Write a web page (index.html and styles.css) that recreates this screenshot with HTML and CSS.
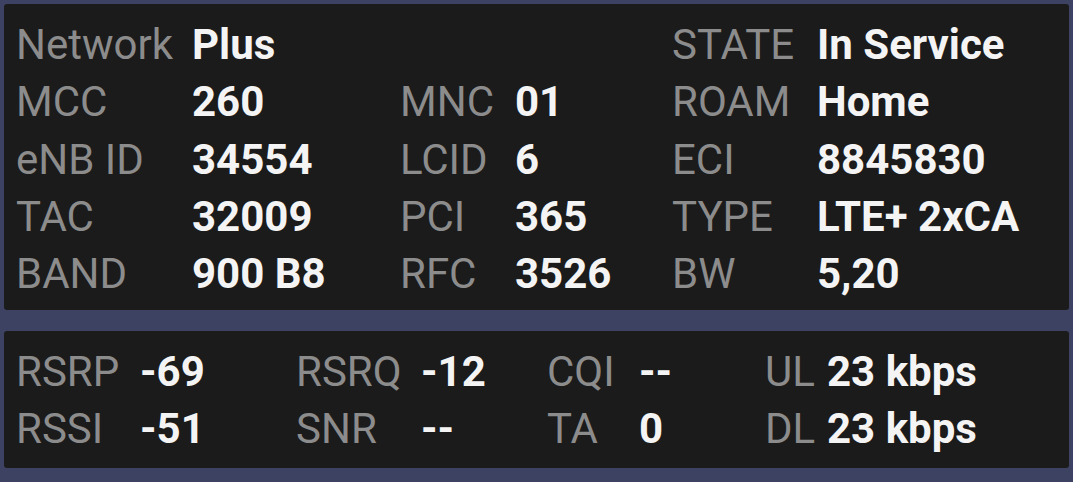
FILE: index.html
```html
<!DOCTYPE html>
<html>
<head>
<meta charset="utf-8">
<link rel="stylesheet" href="styles.css">
</head>
<body>
<div class="page">
  <section class="panel info">
    <span class="lbl">Network</span><span class="val">Plus</span><span class="lbl"></span><span class="val"></span><span class="lbl">STATE</span><span class="val">In Service</span>
    <span class="lbl">MCC</span><span class="val">260</span><span class="lbl">MNC</span><span class="val">01</span><span class="lbl">ROAM</span><span class="val">Home</span>
    <span class="lbl">eNB ID</span><span class="val">34554</span><span class="lbl">LCID</span><span class="val">6</span><span class="lbl">ECI</span><span class="val">8845830</span>
    <span class="lbl">TAC</span><span class="val">32009</span><span class="lbl">PCI</span><span class="val">365</span><span class="lbl">TYPE</span><span class="val">LTE+ 2xCA</span>
    <span class="lbl">BAND</span><span class="val">900 B8</span><span class="lbl">RFC</span><span class="val">3526</span><span class="lbl">BW</span><span class="val">5,20</span>
  </section>
  <section class="panel signal">
    <span class="lbl">RSRP</span><span class="val">-69</span><span class="lbl">RSRQ</span><span class="val">-12</span><span class="lbl">CQI</span><span class="val">--</span><span class="lbl">UL</span><span class="val">23 kbps</span>
    <span class="lbl">RSSI</span><span class="val">-51</span><span class="lbl">SNR</span><span class="val">--</span><span class="lbl">TA</span><span class="val">0</span><span class="lbl">DL</span><span class="val">23 kbps</span>
  </section>
</div>
</body>
</html>
```

FILE: styles.css
```css
html, body {
  margin: 0;
  padding: 0;
  background: #3d4263;
}
body {
  width: 1073px;
  height: 482px;
  overflow: hidden;
  font-family: Roboto, "Noto Sans", sans-serif;
}
.page {
  display: flex;
  flex-direction: column;
  gap: 21px;
  padding: 4px 4px 0 4px;
}
.panel {
  background: #1b1b1b;
  border-radius: 3px;
  display: grid;
  font-size: 42px;
  line-height: 57px;
  padding-left: 12px;
  box-sizing: border-box;
}
.info {
  height: 306px;
  padding-top: 12px;
  grid-template-columns: 176px 208px 115px 157px 145px 1fr;
  grid-template-rows: repeat(5, 57.3px);
}
.signal {
  height: 137px;
  padding-top: 12px;
  grid-template-columns: 124px 156px 125px 126px 92px 126px 62px 1fr;
  grid-template-rows: repeat(2, 57.3px);
}
.lbl {
  color: #8c8c8c;
  font-weight: 400;
  white-space: nowrap;
}
.val {
  color: #f4f4f4;
  font-weight: 700;
  white-space: nowrap;
}
```
